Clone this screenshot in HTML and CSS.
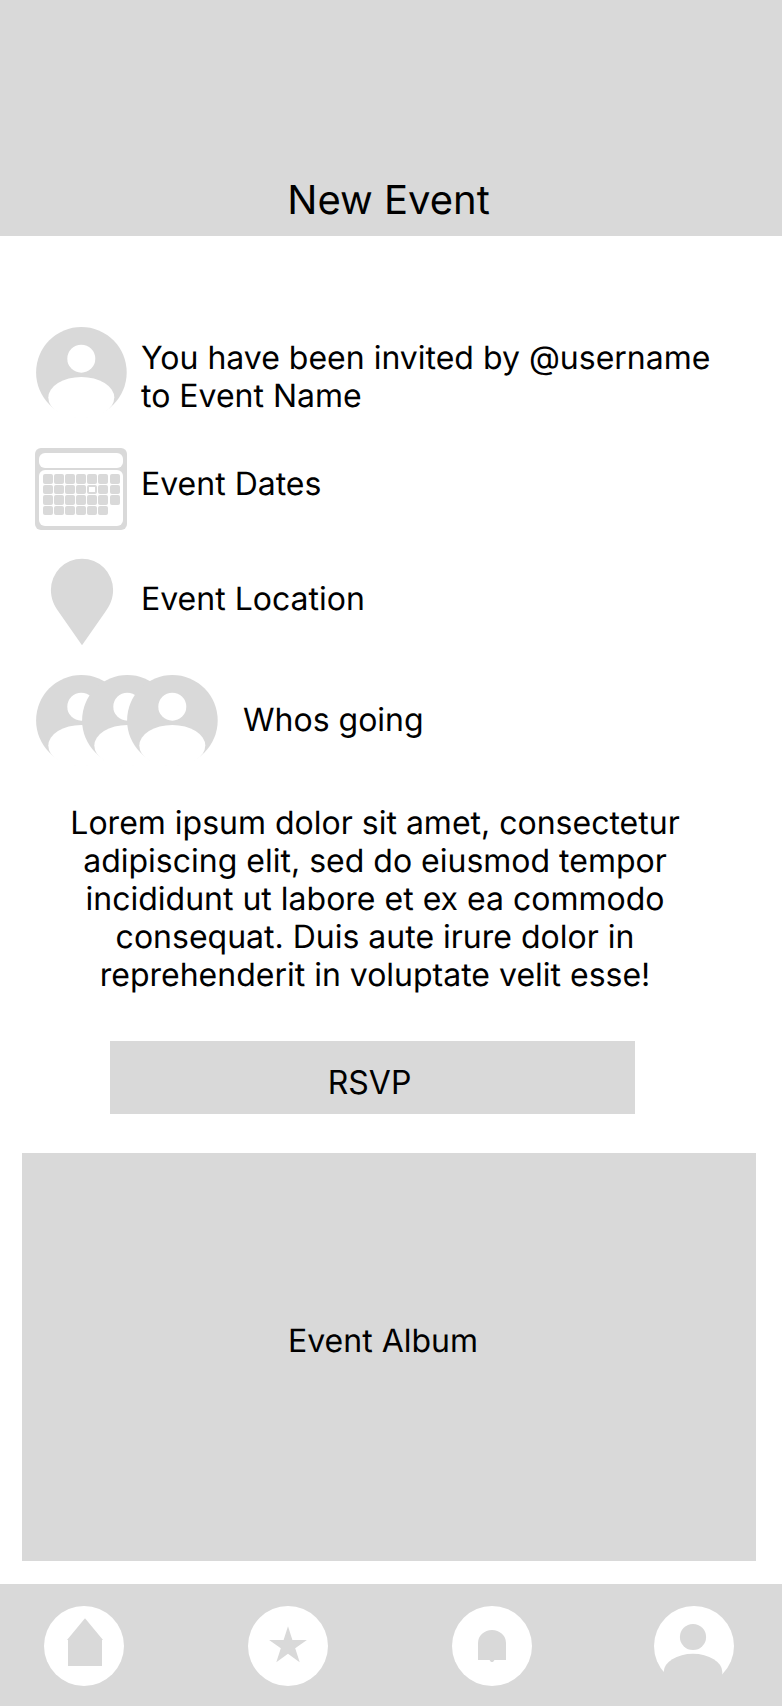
FILE: index.html
```html
<!DOCTYPE html>
<html>
<head>
	<title>New Event</title>
	<meta charset="utf-8">
	<link rel="stylesheet" href="styles.css">
</head>
<body>
	<!-- shared shapes -->
	<svg class="defs" width="0" height="0">
		<symbol id="avatar" viewBox="0 0 91 91">
			<circle cx="45.4" cy="45.4" r="45.3" fill="#d9d9d9"/>
			<circle cx="45.3" cy="31.7" r="14" fill="#fff"/>
			<ellipse cx="45.3" cy="70.6" rx="33" ry="20.6" fill="#fff"/>
		</symbol>
	</svg>

	<header class="header">
		<h1>New Event</h1>
	</header>

	<main class="content">
		<div class="row invite">
			<div class="icon"><svg width="91" height="91"><use href="#avatar"/></svg></div>
			<p>You have been invited by @username<br>to Event Name</p>
		</div>

		<div class="row dates">
			<div class="icon">
				<div class="calendar">
					<div class="cal_top"></div>
					<div class="cal_days">
						<i></i><i></i><i></i><i></i><i></i><i></i><i></i>
						<i></i><i></i><i></i><i></i><i class="today"></i><i></i><i></i>
						<i></i><i></i><i></i><i></i><i></i><i></i><i></i>
						<i></i><i></i><i></i><i></i><i></i><i></i>
					</div>
				</div>
			</div>
			<p>Event Dates</p>
		</div>

		<div class="row location">
			<div class="icon">
				<svg width="64" height="88" viewBox="0 0 64 88">
					<path d="M32 87.3L8.8 54C4 47.5 .9 40.5 .9 32A31.1 31.3 0 0 1 63.1 32C63.1 40.5 60 47.5 55.2 54Z" fill="#d9d9d9"/>
				</svg>
			</div>
			<p>Event Location</p>
		</div>

		<div class="row going">
			<div class="people">
				<svg width="91" height="91"><use href="#avatar"/></svg>
				<svg width="91" height="91"><use href="#avatar"/></svg>
				<svg width="91" height="91"><use href="#avatar"/></svg>
			</div>
			<p>Whos going</p>
		</div>

		<p class="description">Lorem ipsum dolor sit amet, consectetur<br>adipiscing elit, sed do eiusmod tempor<br>incididunt ut labore et ex ea commodo<br>consequat. Duis aute irure dolor in<br>reprehenderit in voluptate velit esse!</p>

		<button class="rsvp">RSVP</button>

		<div class="album">Event Album</div>
	</main>

	<nav class="nav">
		<a>
			<svg width="80" height="80" viewBox="0 0 80 80">
				<circle cx="40" cy="40" r="40" fill="#fff"/>
				<path d="M41 12.3L59 34H58V60H24V34H23Z" fill="#d9d9d9"/>
			</svg>
		</a>
		<a>
			<svg width="80" height="80" viewBox="0 0 80 80">
				<circle cx="40" cy="40" r="40" fill="#fff"/>
				<path d="M40 20.3L44.4 34H58.9L47.2 42.3L51.7 56.2L40 47.8L28.3 56.2L32.8 42.3L21.1 34H35.6Z" fill="#d9d9d9"/>
			</svg>
		</a>
		<a>
			<svg width="80" height="80" viewBox="0 0 80 80">
				<circle cx="40" cy="40" r="40" fill="#fff"/>
				<path d="M26 54V37A14 13 0 0 1 54 37V54H42.5L41 56H39L37.5 54Z" fill="#d9d9d9"/>
			</svg>
		</a>
		<a>
			<svg width="80" height="80" viewBox="0 0 80 80">
				<circle cx="40" cy="40" r="40" fill="#fff"/>
				<circle cx="39" cy="31" r="13.1" fill="#d9d9d9"/>
				<path d="M9.7 66A29.3 18.2 0 0 1 68.3 66V80H9.7Z" fill="#d9d9d9"/>
			</svg>
		</a>
	</nav>
</body>
</html>
```
FILE: styles.css
```css
*{margin:0;padding:0;box-sizing:border-box;}
body{width:782px;height:1706px;display:flex;flex-direction:column;background:#fff;color:#000;font-family:Inter,sans-serif;font-size:32px;line-height:38px;text-rendering:geometricPrecision;}
svg{display:block;}
.defs{position:absolute;}

/*header*/
.header{height:236px;padding:176px 5px 0 0;background:#d9d9d9;text-align:center;}
.header h1{font-size:40px;line-height:48px;font-weight:400;}

/*event details*/
.content{flex:1;padding-top:91px;}
.row{display:flex;padding-left:35px;}
.icon{width:92px;margin-right:14px;display:flex;justify-content:center;}
.invite{height:121px;}
.invite p{padding-top:12px;}
.dates{height:110px;}
.dates p{padding-top:17px;}
.location{height:117px;}
.location .icon{padding-left:2px;}
.location p{padding-top:22px;}
.going{height:129px;padding-left:36px;}
.going p{padding-top:26px;margin-left:25px;}
.people{display:flex;}
.people svg + svg{margin-left:-45.5px;}

/*calendar icon*/
.calendar{width:92px;height:82px;padding:5px 4px 4px;background:#d9d9d9;border-radius:6px;}
.cal_top{height:15px;margin-bottom:2px;background:#fff;border-radius:6px;}
.cal_days{height:56px;padding:4px 3px 4px 4px;display:grid;grid-template-columns:repeat(7,10px);grid-auto-rows:9.5px;gap:1px 1.1px;background:#fff;border-radius:6px;}
.cal_days i{background:#d9d9d9;border-radius:2px;}
.cal_days .today{background:#fff;border:2px solid #d9d9d9;}

.description{width:750px;margin-bottom:47px;text-align:center;}
.rsvp{display:block;width:525px;height:73px;margin:0 0 39px 110px;padding:10px 6px 0 0;border:0;background:#d9d9d9;font:inherit;color:#000;}
.album{width:734px;height:408px;margin-left:22px;padding:169px 12px 0 0;background:#d9d9d9;text-align:center;}

/*bottom nav*/
.nav{height:122px;padding:22px 0 0 44px;display:flex;gap:124px;background:#d9d9d9;}
.nav a:last-child{margin-left:-2px;}
```
